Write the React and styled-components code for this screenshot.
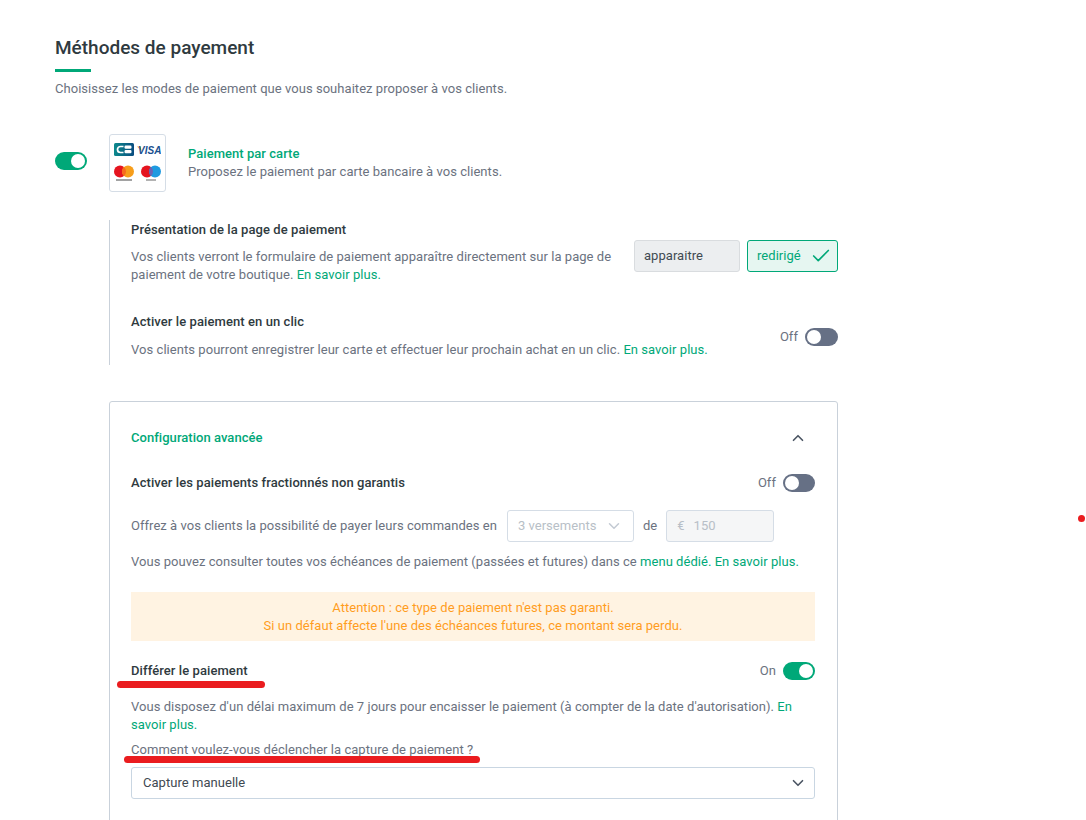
import React from "react";
import styled, { createGlobalStyle } from "styled-components";
import { Check, ChevronDown, ChevronUp } from "lucide-react";

const GlobalStyle = createGlobalStyle`
  html, body {
    margin: 0;
    height: 820px;
    overflow: hidden;
    background: #fff;
    font-family: Roboto, "Liberation Sans", sans-serif;
    color: #6b7280;
  }
`;

const green = "#00a878";

const Toggle = ({ on }) => (
  <Track $on={on}>
    <Knob $on={on} />
  </Track>
);

const CardLogos = () => (
  <LogoBox>
    <svg width="47" height="40" viewBox="0 0 47 40">
      <defs>
        <linearGradient id="cb" x1="0" y1="0" x2="1" y2="0">
          <stop offset="0" stopColor="#0c8a8c" />
          <stop offset="1" stopColor="#0a4c80" />
        </linearGradient>
      </defs>
      <rect x="0" y="0" width="20" height="13" rx="1.5" fill="url(#cb)" />
      <path d="M9.5 3.5 H6.5 a3 3 0 0 0 0 6 H9.5" fill="none" stroke="#fff" strokeWidth="1.7" />
      <rect x="10.5" y="2.6" width="7" height="3.2" rx="1.2" fill="#fff" />
      <rect x="10.5" y="7" width="7" height="3.2" rx="1.2" fill="#fff" />
      <path d="M23 3.5 L26.5 3.5 L27.5 8 Z" fill="#f0a92a" />
      <text x="24" y="11" fontFamily="Liberation Sans" fontSize="10" fontWeight="700" fontStyle="italic" fill="#1a4f8f">VISA</text>
      <circle cx="6" cy="28.5" r="6" fill="#e5141f" />
      <circle cx="14" cy="28.5" r="6" fill="#f79e1b" />
      <path d="M10 24 a6 6 0 0 1 0 9 a6 6 0 0 1 0 -9" fill="#f76b1c" />
      <rect x="2" y="36" width="16" height="2" fill="#555" opacity="0.55" />
      <circle cx="33" cy="28.5" r="6" fill="#e5141f" />
      <circle cx="41" cy="28.5" r="6" fill="#1e9ae0" />
      <path d="M37 24 a6 6 0 0 1 0 9 a6 6 0 0 1 0 -9" fill="#6d63b5" />
      <rect x="32" y="36" width="10" height="2" fill="#555" opacity="0.45" />
    </svg>
  </LogoBox>
);

export default function App() {
  return (
    <Page>
      <GlobalStyle />
      <Title>Méthodes de payement</Title>
      <TitleBar />
      <Subtitle>Choisissez les modes de paiement que vous souhaitez proposer à vos clients.</Subtitle>

      <MethodRow>
        <Toggle on />
        <CardLogos />
        <MethodText>
          <MethodName>Paiement par carte</MethodName>
          <Text>Proposez le paiement par carte bancaire à vos clients.</Text>
        </MethodText>
      </MethodRow>

      <Options>
        <OptionTitle>Présentation de la page de paiement</OptionTitle>
        <DisplayRow>
          <DisplayText>
            Vos clients verront le formulaire de paiement apparaître directement sur la page de paiement de votre boutique. <Link>En savoir plus.</Link>
          </DisplayText>
          <ChoiceButton>apparaitre</ChoiceButton>
          <ChoiceButton $selected>
            redirigé
            <Check size={22} strokeWidth={1.8} />
          </ChoiceButton>
        </DisplayRow>
        <OneClickRow>
          <div>
            <OptionTitle>Activer le paiement en un clic</OptionTitle>
            <ClickText>
              Vos clients pourront enregistrer leur carte et effectuer leur prochain achat en un clic. <Link>En savoir plus.</Link>
            </ClickText>
          </div>
          <SwitchLabel>
            Off
            <Toggle />
          </SwitchLabel>
        </OneClickRow>
      </Options>

      <Card>
        <CardHeader>
          <MethodName>Configuration avancée</MethodName>
          <ChevronUp size={18} color="#4b5563" strokeWidth={2.2} />
        </CardHeader>

        <SpaceRow>
          <OptionTitle>Activer les paiements fractionnés non garantis</OptionTitle>
          <SwitchLabel>
            Off
            <Toggle />
          </SwitchLabel>
        </SpaceRow>

        <InstallmentRow>
          <Text>Offrez à vos clients la possibilité de payer leurs commandes en</Text>
          <DisabledSelect>
            3 versements
            <ChevronDown size={18} color="#c3cad3" />
          </DisabledSelect>
          <Text>de</Text>
          <AmountInput>
            <span>€</span>
            <span>150</span>
          </AmountInput>
        </InstallmentRow>

        <ScheduleText>
          Vous pouvez consulter toutes vos échéances de paiement (passées et futures) dans ce <Link>menu dédié. En savoir plus.</Link>
        </ScheduleText>

        <Warning>
          Attention : ce type de paiement n'est pas garanti.
          <br />
          Si un défaut affecte l'une des échéances futures, ce montant sera perdu.
        </Warning>

        <SpaceRow>
          <Annotated>
            <OptionTitle>Différer le paiement</OptionTitle>
            <RedMark $left={-14} $top={19} $width={148} />
          </Annotated>
          <SwitchLabel>
            On
            <Toggle on />
          </SwitchLabel>
        </SpaceRow>

        <DeferText>
          Vous disposez d'un délai maximum de 7 jours pour encaisser le paiement (à compter de la date d'autorisation). <Link>En savoir plus.</Link>
        </DeferText>

        <Annotated>
          <Question>Comment voulez-vous déclencher la capture de paiement ?</Question>
          <RedMark $left={-7} $top={15} $width={356} />
        </Annotated>

        <CaptureSelect>
          Capture manuelle
          <ChevronDown size={18} color="#4b5563" strokeWidth={2.2} />
        </CaptureSelect>
      </Card>

      <RedDot />
    </Page>
  );
}

const Page = styled.div`
  width: 783px;
  padding: 38px 0 0 55px;
  font-size: 13px;
  line-height: 18px;
  letter-spacing: 0.04px;
`;
const Title = styled.h1`
  margin: 0;
  font-size: 19px;
  line-height: 20px;
  font-weight: 500;
  letter-spacing: 0;
  color: #2f3a40;
`;
const TitleBar = styled.div`
  width: 36px;
  height: 3px;
  margin-top: 11px;
  background: ${green};
`;
const Subtitle = styled.p`
  margin: 8px 0 0;
`;
const Track = styled.div`
  width: 32px;
  height: 18px;
  flex: none;
  box-sizing: border-box;
  border-radius: 9px;
  padding: 2px;
  display: flex;
  justify-content: ${(p) => (p.$on ? "flex-end" : "flex-start")};
  background: ${(p) => (p.$on ? green : "#667085")};
`;
const Knob = styled.div`
  width: 14px;
  height: 14px;
  border-radius: 50%;
  background: #fff;
`;
const MethodRow = styled.div`
  display: flex;
  align-items: center;
  margin-top: 36px;
  ${Track} {
    margin-bottom: 4px;
  }
`;
const LogoBox = styled.div`
  width: 57px;
  height: 58px;
  margin: 0 22px;
  box-sizing: border-box;
  border: 1px solid #d5dde6;
  border-radius: 3px;
  display: flex;
  align-items: center;
  justify-content: center;
`;
const MethodText = styled.div`
  display: flex;
  flex-direction: column;
`;
const MethodName = styled.div`
  font-weight: 500;
  font-size: 13px;
  color: ${green};
`;
const Text = styled.span``;
const Link = styled.span`
  color: ${green};
`;
const Options = styled.div`
  margin: 28px 0 0 54px;
  padding: 1px 0 0 21px;
  height: 144px;
  border-left: 1px solid #c9d1da;
  ${Track} {
    width: 33px;
  }
`;
const OptionTitle = styled.div`
  font-weight: 500;
  font-size: 13px;
  letter-spacing: 0.08px;
  color: #2f3a40;
`;
const DisplayRow = styled.div`
  display: flex;
  align-items: flex-start;
  gap: 7px;
  margin-top: 1px;
`;
const DisplayText = styled.p`
  flex: 1;
  margin: 0 8px 0 0;
  padding-top: 8px;
`;
const ChoiceButton = styled.div`
  flex: none;
  height: 32px;
  box-sizing: border-box;
  border-radius: 3px;
  border: 1px solid ${(p) => (p.$selected ? green : "#d9dcdf")};
  background: ${(p) => (p.$selected ? "#e6f6f1" : "#eceef0")};
  color: ${(p) => (p.$selected ? green : "#3f4a52")};
  width: ${(p) => (p.$selected ? "91px" : "106px")};
  padding: ${(p) => (p.$selected ? "0 5px 0 9px" : "0 9px")};
  display: flex;
  align-items: center;
  justify-content: space-between;
`;
const SwitchLabel = styled.div`
  display: flex;
  align-items: center;
  gap: 7px;
`;
const OneClickRow = styled.div`
  display: flex;
  justify-content: space-between;
  align-items: center;
  margin-top: 29px;
  ${SwitchLabel} {
    margin-top: 2px;
  }
`;
const ClickText = styled.p`
  margin: 10px 0 0;
  letter-spacing: 0.05px;
`;
const Card = styled.div`
  margin: 36px 0 0 54px;
  padding: 0 22px 0 21px;
  height: 440px;
  border: 1px solid #c9d1da;
  border-radius: 3px;
`;
const CardHeader = styled.div`
  display: flex;
  justify-content: space-between;
  align-items: center;
  padding: 0 8px 0 0;
  margin: 27px 0 27px;
`;
const SpaceRow = styled.div`
  display: flex;
  justify-content: space-between;
  align-items: center;
`;
const InstallmentRow = styled.div`
  display: flex;
  align-items: center;
  margin-top: 18px;
  ${Text}:first-child {
    margin-right: 10px;
  }
  ${Text}:nth-child(3) {
    margin: 0 9px;
  }
`;
const DisabledSelect = styled.div`
  width: 127px;
  height: 32px;
  box-sizing: border-box;
  padding: 0 10px;
  border: 1px solid #d5dde6;
  border-radius: 3px;
  color: #b8bfc7;
  display: flex;
  align-items: center;
  justify-content: space-between;
`;
const AmountInput = styled.div`
  width: 108px;
  height: 32px;
  box-sizing: border-box;
  padding: 0 10px;
  border: 1px solid #d5dde6;
  border-radius: 3px;
  background: #f5f6f7;
  color: #b8bfc7;
  display: flex;
  align-items: center;
  gap: 9px;
`;
const ScheduleText = styled.p`
  margin: 11px 0 0;
`;
const Warning = styled.div`
  margin: 21px 0 21px;
  padding: 7px 0 6px;
  background: #fff3e2;
  color: #ff9d1e;
  text-align: center;
`;
const Annotated = styled.div`
  position: relative;
`;
const RedMark = styled.div`
  position: absolute;
  left: ${(p) => p.$left}px;
  top: ${(p) => p.$top}px;
  width: ${(p) => p.$width}px;
  height: 7px;
  border-radius: 4px;
  background: #ea1c1f;
`;
const DeferText = styled.p`
  margin: 18px 0 7px;
`;
const Question = styled.div``;
const CaptureSelect = styled.div`
  height: 32px;
  margin-top: 8px;
  box-sizing: border-box;
  padding: 0 7px 0 11px;
  border: 1px solid #c9d6e2;
  border-radius: 3px;
  color: #3f4a52;
  display: flex;
  align-items: center;
  justify-content: space-between;
`;
const RedDot = styled.div`
  position: absolute;
  left: 1078px;
  top: 515px;
  width: 7px;
  height: 7px;
  border-radius: 50%;
  background: #ea1c1f;
`;
